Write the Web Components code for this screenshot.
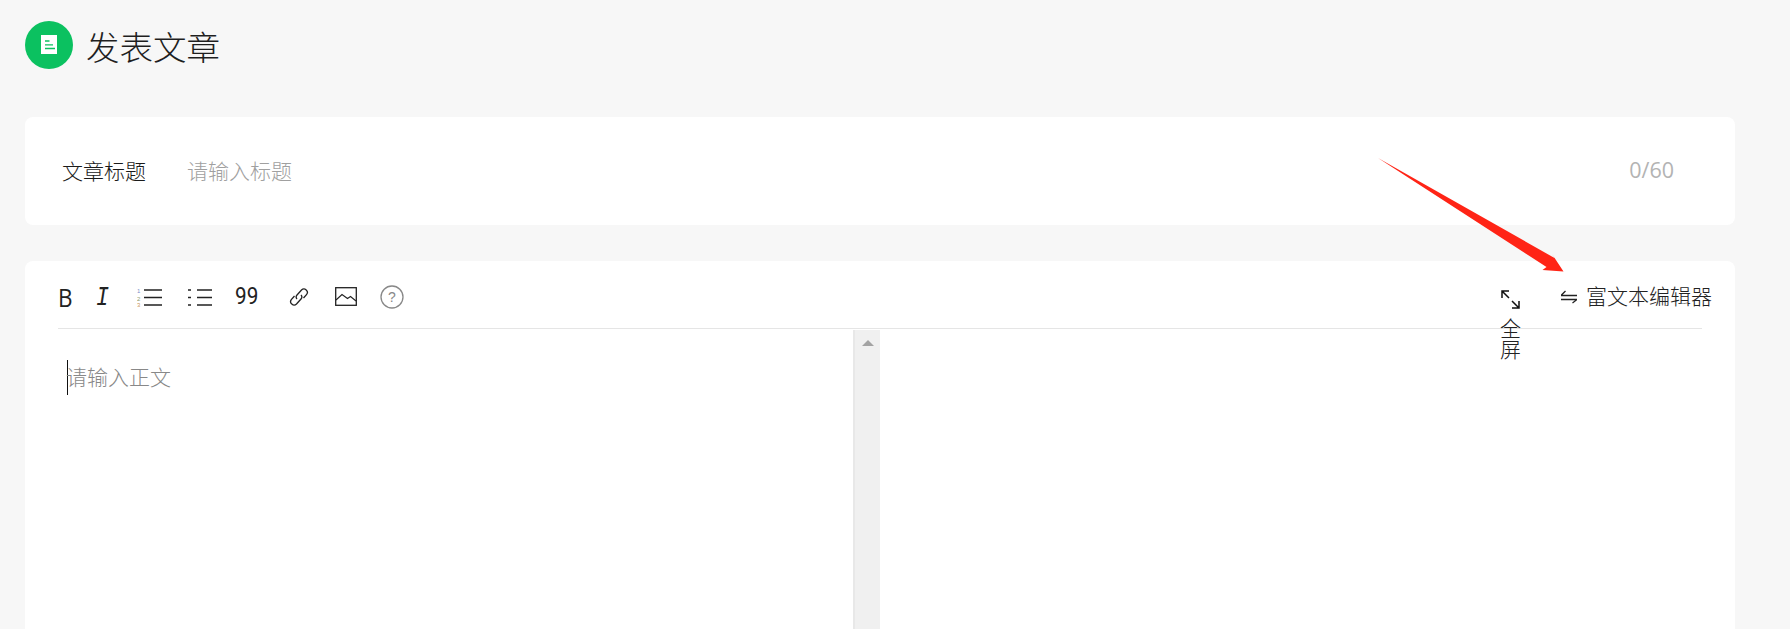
<!DOCTYPE html>
<html lang="zh-CN">
<head>
<meta charset="utf-8">
<title>发表文章</title>
<style>
  html, body { margin: 0; height: 100%; overflow: hidden; background: #f7f7f7; }
  body { font-family: "Noto Sans CJK SC", "Liberation Sans", sans-serif; font-weight: 300; color: #222; }
</style>
</head>
<body>
<publish-page>
  <page-header>发表文章</page-header>
  <title-card label="文章标题" placeholder="请输入标题" count="0/60"></title-card>
  <editor-card placeholder="请输入正文">
    <editor-toolbar></editor-toolbar>
  </editor-card>
  <red-arrow></red-arrow>
</publish-page>

<script>
class PublishPage extends HTMLElement {
    constructor() {
        super();
        this.attachShadow({ mode: 'open' });
        this.shadowRoot.innerHTML = `
            <style>
                :host {
                    display: block;
                    position: relative;
                    height: 629px;
                    box-sizing: border-box;
                    padding: 21px 55px 0 25px;
                    overflow: hidden;
                }
            </style>
            <slot></slot>
        `;
    }
}

class PageHeader extends HTMLElement {
    constructor() {
        super();
        this.attachShadow({ mode: 'open' });
        this.shadowRoot.innerHTML = `
            <style>
                :host {
                    display: flex;
                    align-items: center;
                    gap: 13px;
                    height: 48px;
                    margin-bottom: 48px;
                    font-size: 33.500px;
                    color: #1f1f1f;
                }
                svg { display: block; flex: none; }
            </style>
            <svg width="48" height="48" viewBox="0 0 48 48">
                <circle cx="24" cy="24" r="24" fill="#0bc160"/>
                <path d="M16 14h16v19H16z" fill="#fff"/>
                <path d="M20 20h4.500M20 23.800h8M20 27.500h10" stroke="#0bc160" stroke-width="1.300" fill="none"/>
            </svg>
            <slot></slot>
        `;
    }
}

class TitleCard extends HTMLElement {
    constructor() {
        super();
        this.attachShadow({ mode: 'open' });
        this.shadowRoot.innerHTML = `
            <style>
                :host {
                    display: flex;
                    align-items: center;
                    box-sizing: border-box;
                    height: 108px;
                    margin-bottom: 36px;
                    padding: 0 61px 3px 37px;
                    background: #fff;
                    border-radius: 8px;
                    font-size: 21px;
                }
                .label { width: 125px; flex: none; color: #1a1a1a; }
                .placeholder { flex: 1; color: #a0a0a0; }
                .count { color: #b3b3b3; font-family: "Open Sans", sans-serif; font-size: 21.500px; font-weight: 400; }
            </style>
            <span class="label">${this.getAttribute('label')}</span>
            <span class="placeholder">${this.getAttribute('placeholder')}</span>
            <span class="count">${this.getAttribute('count')}</span>
        `;
    }
}

class EditorCard extends HTMLElement {
    constructor() {
        super();
        this.attachShadow({ mode: 'open' });
        this.shadowRoot.innerHTML = `
            <style>
                :host {
                    display: block;
                    height: 400px;
                    padding: 0 33px;
                    background: #fff;
                    border-radius: 8px 8px 0 0;
                }
                .panes {
                    display: grid;
                    grid-template-columns: 795px 2px 25px 1fr;
                    height: 331px;
                    padding-top: 1px;
                }
                .source {
                    display: flex;
                    align-items: flex-start;
                    padding: 30px 0 0 9px;
                    font-size: 21px;
                    line-height: 35px;
                    color: #888;
                }
                .caret { width: 1px; height: 35px; margin-right: -2px; background: #111; flex: none; }
                .text { margin-top: -1px; }
                .line { background: #e8e8e8; }
                .bar { display: flex; justify-content: center; background: #f0f0f0; padding-top: 10px; }
                .arrow {
                    width: 0;
                    height: 0;
                    border: 6px solid transparent;
                    border-top: 0;
                    border-bottom-color: #a3a3a3;
                }
            </style>
            <slot></slot>
            <div class="panes">
                <div class="source"><span class="caret"></span><span class="text">${this.getAttribute('placeholder')}</span></div>
                <div class="line"></div>
                <div class="bar"><div class="arrow"></div></div>
                <div></div>
            </div>
        `;
    }
}

class EditorToolbar extends HTMLElement {
    constructor() {
        super();
        this.attachShadow({ mode: 'open' });
        this.shadowRoot.innerHTML = `
            <style>
                :host {
                    display: flex;
                    align-items: center;
                    height: 63px;
                    padding: 4px 0 0 0;
                    border-bottom: 1px solid #e5e5e5;
                    color: #222;
                }
                svg { display: block; flex: none; }
                .glyph { flex: none; line-height: 20px; font-weight: 400; }
                .bold { width: 14px; margin-right: 26px; font: 400 25px/20px "Open Sans", sans-serif; transform: scaleX(.9); transform-origin: left; }
                .italic { width: 12px; margin-right: 29px; margin-left: -2px; padding-top: 3px; font: italic 400 27px/20px "Liberation Mono", monospace; transform: scaleX(.8); transform-origin: left; }
                .quote { width: 23px; margin: 0 31px 0 23px; font: 400 23px/20px Roboto, sans-serif; transform: scaleX(.9); transform-origin: left; }
                .fill { flex: 1; }
                .fullscreen {
                    align-self: flex-start;
                    display: flex;
                    flex-direction: column;
                    align-items: center;
                    width: 21px;
                    height: 0;
                    margin-top: 25px;
                    font-size: 21px;
                    line-height: 21px;
                    color: #222;
                }
                .fullscreen svg { margin-bottom: 8px; }
                .toggle { display: flex; align-items: center; margin: 0 -10px 4px 40px; font-size: 21px; white-space: nowrap; }
                .toggle svg { margin: 4px 9px 0 0; }
            </style>
            <span class="glyph bold">B</span>
            <span class="glyph italic">I</span>
            <svg width="25" height="20" viewBox="0 0 25 20" style="margin-right:26px">
                <g font-family="Liberation Sans, sans-serif" font-size="6" fill="#7b8fc9">
                    <text x="0" y="6">1</text>
                    <text x="0" y="13.500" fill="#8a9a6c">2</text>
                    <text x="0" y="20" fill="#c9975c">3</text>
                </g>
                <path d="M7 3h18M7 10.500h18M7 18h18" stroke="#222" stroke-width="1.500"/>
            </svg>
            <svg width="24" height="20" viewBox="0 0 24 20">
                <path d="M9 3h15M9 10.500h15M9 18h15" stroke="#222" stroke-width="1.500"/>
                <path d="M0 3h3M0 10.500h3M0 18h3" stroke="#222" stroke-width="1.500"/>
            </svg>
            <span class="glyph quote">99</span>
            <svg width="20" height="20" viewBox="0 0 20 20" fill="none" stroke="#222" stroke-width="1.300" style="margin-right:26px">
                <path d="M8 12a3 3 0 0 1 0-4l4.500-5a3.400 3.400 0 0 1 5 4.600l-3 3.400"/>
                <path d="M12 8a3 3 0 0 1 0 4l-4.500 5a3.400 3.400 0 0 1-5-4.600l3-3.400"/>
            </svg>
            <svg width="22" height="19" viewBox="0 0 22 19" fill="none" stroke="#222" style="margin-right:23px">
                <rect x=".7" y=".7" width="20.600" height="17.600" stroke-width="1.300"/>
                <path d="M1 13 7 7.500 12.500 11.500 15.500 9.500 21 14" stroke-width="1.100"/>
            </svg>
            <svg width="24" height="24" viewBox="0 0 24 24">
                <circle cx="12" cy="12" r="11" fill="none" stroke="#888" stroke-width="1.300"/>
                <text x="12" y="17" text-anchor="middle" font-family="Liberation Sans, sans-serif" font-size="14" fill="#888">?</text>
            </svg>
            <div class="fill"></div>
            <div class="fullscreen">
                <svg width="19" height="19" viewBox="0 0 19 19" fill="none" stroke="#111" stroke-width="1.500">
                    <path d="M1 8V1h7M1 1l7 7M18 11v7h-7M18 18l-7-7"/>
                </svg>
                <span>全屏</span>
            </div>
            <div class="toggle">
                <svg width="16" height="14" viewBox="0 0 16 14" fill="none" stroke="#222" stroke-width="1.300">
                    <path d="M0 5.500h16M0 5.500 4.500 1M16 9.500H0M16 9.500 11.500 13"/>
                </svg>
                <span>富文本编辑器</span>
            </div>
        `;
    }
}

class RedArrow extends HTMLElement {
    constructor() {
        super();
        this.attachShadow({ mode: 'open' });
        this.shadowRoot.innerHTML = `
            <style>
                :host { position: absolute; left: 0; top: 0; pointer-events: none; }
                svg { display: block; }
            </style>
            <svg width="1790" height="629" viewBox="0 0 1790 629">
                <polygon points="1378,158 1554.500,258 1552,254 1563.500,271.500 1542.500,270 1546.500,267" fill="#ff2416"/>
            </svg>
        `;
    }
}

customElements.define('publish-page', PublishPage);
customElements.define('page-header', PageHeader);
customElements.define('title-card', TitleCard);
customElements.define('editor-card', EditorCard);
customElements.define('editor-toolbar', EditorToolbar);
customElements.define('red-arrow', RedArrow);
</script>
</body>
</html>
